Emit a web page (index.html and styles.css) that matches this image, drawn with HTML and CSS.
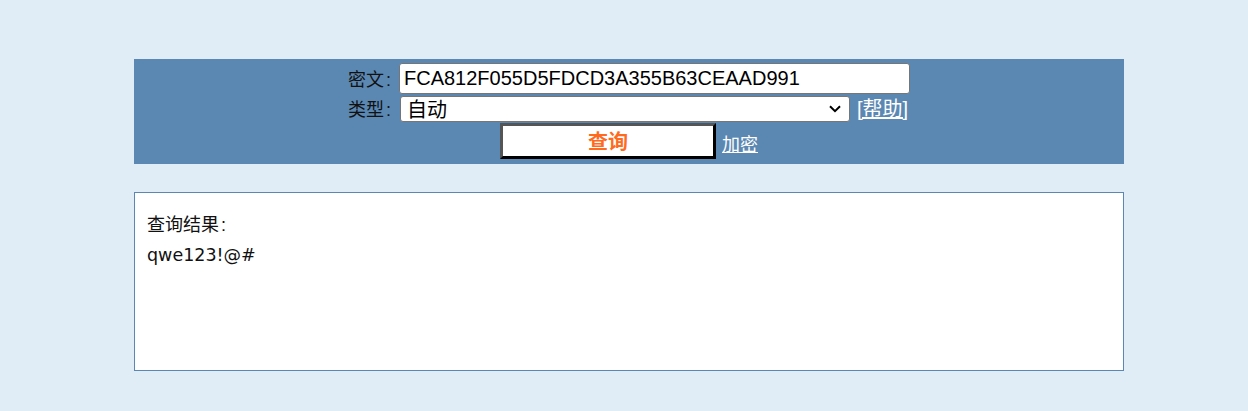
FILE: index.html
```html
<!DOCTYPE html>
<html lang="zh-CN">
<head>
<meta charset="utf-8">
<title>查询</title>
<link rel="stylesheet" href="styles.css">
</head>
<body>
<div class="page">
  <form class="panel">
    <div class="row">
      <label class="label" for="hash">密文<span class="colon">:</span></label>
      <input class="hash" id="hash" type="text" value="FCA812F055D5FDCD3A355B63CEAAD991">
    </div>
    <div class="row">
      <label class="label" for="type">类型<span class="colon">:</span></label>
      <select class="type" id="type">
        <option>自动</option>
      </select>
      <a class="help" href="#">[帮助]</a>
    </div>
    <div class="row">
      <button class="submit" type="button">查询</button>
      <a class="encrypt" href="#">加密</a>
    </div>
  </form>
  <div class="result">
    <div class="result-title">查询结果<span class="colon">:</span></div>
    <div class="result-value">qwe123!@#</div>
  </div>
</div>
</body>
</html>
```
FILE: styles.css
```css
html, body {
  margin: 0;
  padding: 0;
}
body {
  background: #e0edf6;
  font-family: "Noto Sans CJK SC", "Liberation Sans", sans-serif;
  color: #111;
}
.page {
  width: 990px;
  margin-left: 134px;
  padding-top: 59px;
}
.panel {
  background: #5b88b3;
  height: 105px;
  box-sizing: border-box;
  padding-top: 4px;
  display: flex;
  flex-direction: column;
}
.row {
  display: flex;
  justify-content: center;
  align-items: center;
}
.row + .row {
  margin-top: 2px;
}
.row:last-child {
  margin-top: 1px;
}
.label {
  width: 48px;
  font-size: 18px;
  line-height: 22px;
  color: #111;
  white-space: nowrap;
}
.colon {
  font-family: "Liberation Sans", sans-serif;
  margin-left: 2px;
}
.hash {
  margin-left: 3px;
  width: 511px;
  height: 31px;
  box-sizing: border-box;
  border: 1px solid #767676;
  border-radius: 3px;
  background: #fff;
  padding: 0 4px;
  font-family: "Liberation Sans", "Noto Sans CJK SC", sans-serif;
  font-size: 20px;
  color: #000;
}
.type {
  -webkit-appearance: none;
  appearance: none;
  margin-left: 4px;
  width: 450px;
  height: 26px;
  box-sizing: border-box;
  border: 1px solid #767676;
  border-radius: 3px;
  background-color: #fff;
  background-image: url("data:image/svg+xml,%3Csvg xmlns='http://www.w3.org/2000/svg' width='12' height='8' viewBox='0 0 12 8'%3E%3Cpath d='M1 1.2 6 6.2 11 1.2' fill='none' stroke='%23000' stroke-width='2'/%3E%3C/svg%3E");
  background-repeat: no-repeat;
  background-position: right 8px center;
  font-family: "Noto Sans CJK SC", sans-serif;
  font-size: 20px;
  line-height: 24px;
  color: #000;
  padding: 0 0 0 6px;
}
.help {
  margin-left: 7px;
  width: 53px;
  font-family: "Liberation Sans", "Noto Sans CJK SC", sans-serif;
  font-size: 20px;
  line-height: 22px;
  color: #fff;
  white-space: nowrap;
}
.submit {
  width: 216px;
  height: 36px;
  box-sizing: border-box;
  background: #fff;
  border-style: solid;
  border-width: 3px;
  border-color: #555 #000 #000 #555;
  color: #ff6a1f;
  font-family: "Noto Sans CJK SC", sans-serif;
  font-weight: bold;
  font-size: 20px;
  line-height: 26px;
  padding: 0;
}
.encrypt {
  margin-left: 6px;
  font-size: 18px;
  line-height: 22px;
  margin-top: 4px;
  color: #fff;
}
.result {
  margin-top: 28px;
  height: 179px;
  box-sizing: border-box;
  background: #fff;
  border: 1px solid #5b88b3;
  padding: 15px 12px;
}
.result-title {
  font-size: 18px;
  line-height: 30px;
  color: #111;
}
.result-value {
  font-family: "DejaVu Sans", sans-serif;
  font-size: 17.5px;
  line-height: 30px;
  color: #111;
}
```
